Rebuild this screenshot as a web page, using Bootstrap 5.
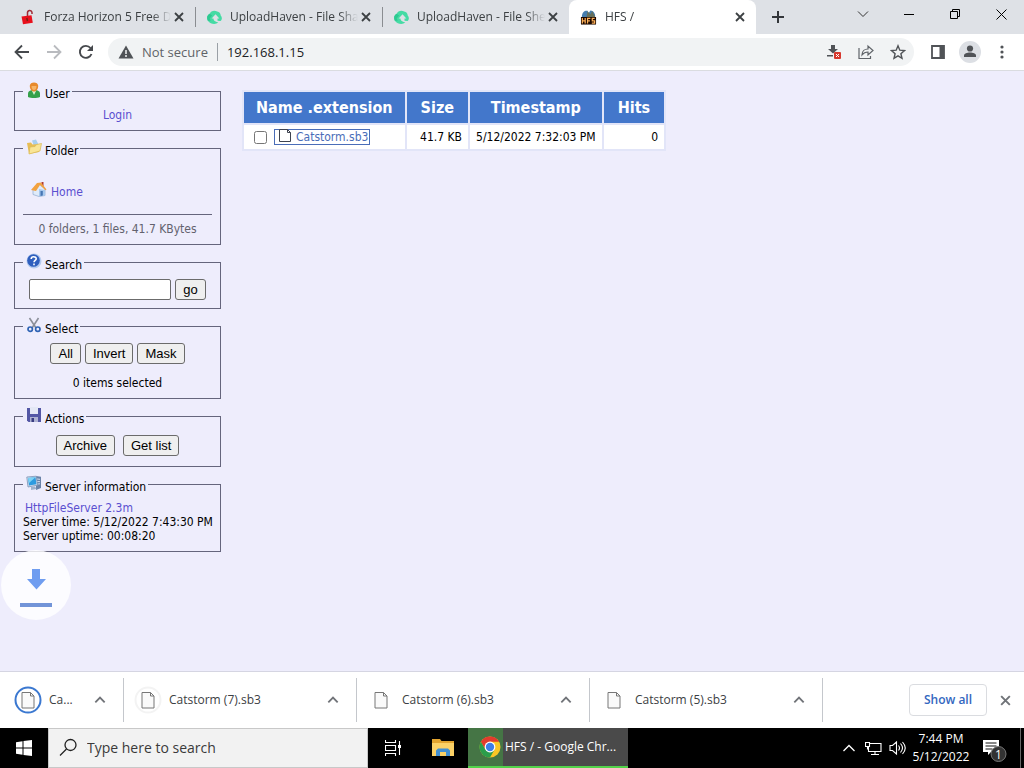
<!DOCTYPE html>
<html lang="en">
<head>
<meta charset="utf-8">
<meta name="viewport" content="width=device-width, initial-scale=1">
<title>HFS /</title>
<link href="https://cdn.jsdelivr.net/npm/bootstrap@5.3.0/dist/css/bootstrap.min.css" rel="stylesheet">
<style>
  body { font: 12px/16px "Open Sans", "Noto Sans", sans-serif; color: #3c4043; background: #eeedfc; }
  button, input { font: inherit; color: inherit; }
  button { background: none; border: 0; padding: 0; }
  svg { display: block; flex: none; }
  .ico-btn { display: inline-flex; align-items: center; justify-content: center; flex: none; }

  /* browser frame */
  .tab-strip { background: #dee1e6; height: 34px; padding-left: 8px; }
  .tab-item { flex: 0 1 187px; min-width: 0; height: 34px; padding: 0 8px 0 12px; position: relative; }
  .tab-item + .tab-item { padding-left: 11px; }
  .tab-item + .tab-item:not(.is-active) { border-left: 1px solid #8a8d91; border-image: linear-gradient(transparent 8px, #8a8d91 8px, #8a8d91 26px, transparent 26px) 1; }
  .tab-item.is-active { background: #fff; border-radius: 8px 8px 0 0; }
  .tab-title { flex: 1 1 0; min-width: 0; text-align: left; overflow: hidden; white-space: nowrap; -webkit-mask-image: linear-gradient(90deg, #000 85%, transparent); mask-image: linear-gradient(90deg, #000 85%, transparent); }
  .tab-shut { width: 16px; height: 16px; }
  .new-tab { width: 44px; height: 34px; }
  .win-btn { width: 46px; height: 28px; }
  .tool-row { background: #fff; height: 37px; padding: 0 6px; border-bottom: 1px solid #dadce0; }
  .tool-btn { width: 32px; height: 32px; }
  .omni { background: #f1f3f4; border-radius: 14px; height: 28px; padding: 0 0 0 10px; margin-left: 6px; margin-right: 8px; }
  .omni-note { font-size: 13px; color: #5f6368; }
  .omni-field { flex: 1 1 0; min-width: 0; border: 0; background: transparent; font-size: 13px; color: #202124; padding: 0 0 0 9px; margin-left: 9px; border-left: 1px solid #9aa0a6; height: 18px; outline: 0; }

  /* file server page */
  .hfs { font: 12px/14px "DejaVu Sans Condensed", "DejaVu Sans", sans-serif; color: #000; position: relative; }
  .hfs a { color: #5a4fd0; text-decoration: none; }
  .side { width: 207px; flex: none; margin: 9px 0 0 14px; gap: 6px; }
  .panel { border: 1px solid #65657c; padding: 6px 8px 8px; min-width: 0; }
  .panel legend { float: none; width: fit-content; height: 22px; margin: 0; padding: 0 2px 0 3px; display: flex; align-items: center; font: inherit; }
  .panel legend svg { margin-right: 3px; margin-bottom: 2px; }
  .panel legend span { padding-top: 6px; }
  .home-row { padding: 16px 0 15px 8px; }
  .sum { border-top: 1px solid #65657c; padding-top: 7px; color: #62626e; }
  .action-row { padding: 2px 0; }
  .about { padding-left: 2px; }
  .hfs-btn { font: 13px/19px "Liberation Sans", Arial, sans-serif; color: #000; background: #efefef; border: 1px solid #6b6b6b; border-radius: 3px; padding: 0 7px; height: 21px; }
  .hfs-field { width: 142px; height: 21px; border: 1px solid #6b6b6b; border-radius: 2px; background: #fff; padding: 0 4px; }
  .files { margin: 19px 0 0 21px; border-collapse: separate; border-spacing: 2px; background: #e2e5f8; align-self: flex-start; }
  .files th { background: #4377cb; color: #fff; font-size: 16px; line-height: 20px; padding: 6px 14px 5px; text-align: center; }
  .files th:first-child { padding-left: 12px; padding-right: 12px; }
  .files td { background: #fff; padding: 4px 6px; text-align: right; line-height: 16px; white-space: nowrap; }
  .files input { width: 13px; height: 13px; margin: 0 7px 0 4px; }
  .files .file-link { color: #4a6db8; border: 1px solid #4a6db8; padding: 0 1px 0 3px; height: 16px; }
  .float-dl { position: absolute; left: 1px; top: 479px; width: 70px; height: 70px; border-radius: 50%; background: rgba(255,255,255,.8); }

  /* download shelf */
  .shelf { background: #fff; border-top: 1px solid #d5d5e2; height: 57px; }
  .shelf .ico-btn { color: #707378; }
  .dl { flex: 0 1 233px; min-width: 0; height: 44px; border-right: 1px solid #c4c7cc; padding: 0 16px 0 10px; }
  .dl-first { flex-basis: 124px; padding-left: 14px; }
  .dl-name { flex: 1 1 0; text-align: left; margin-left: 7px; }
  .show-all { height: 32px; border: 1px solid #dadce0; border-radius: 4px; color: #3367c0; width: 78px; font-weight: 600; }

  /* desktop bar */
  .desk-bar { background: #000; color: #fff; height: 40px; }
  .start-btn { width: 48px; height: 40px; }
  .desk-find { flex: 0 1 320px; min-width: 0; background: #f2f2f2; color: #3a3a3a; border: 1px solid #c8c8c8; }
  .desk-find input { border: 0; background: transparent; font-size: 14px; outline: 0; min-width: 0; }
  .desk-find input::placeholder { color: #3a3a3a; opacity: 1; }
  .desk-btn { width: 50px; height: 40px; }
  .desk-app { flex: 0 0 160px; background: linear-gradient(90deg, #457545 35px, #4a4a4a 35px); border-bottom: 2px solid #52d24a; padding-left: 11px; }
  .tray-btn { width: 24px; height: 40px; }
  .clock { width: 64px; line-height: 18px; }
  .notes { margin: 0 11px 0 8px; }
  .peek { border-left: 1px solid #666; width: 4px; height: 40px; }
</style>
</head>
<body class="vh-100 d-flex flex-column overflow-hidden">

<svg width="0" height="0" class="position-absolute" aria-hidden="true">
  <symbol id="shut" viewBox="0 0 12 12"><path d="M2 2l8 8M10 2l-8 8" stroke="currentColor" stroke-width="1.8"/></symbol>
  <symbol id="haven" viewBox="0 0 14 14"><path d="M.8 10C-.6 7.500.3 4.500 2.500 3.600 3.600.8 7 0 9.500 1.500c2 .3 3.200 1.700 3.300 3.600 1.400 1.300 1.500 4-.2 5.200L9.800 10V8h1.700L8 4 4.300 8H6c.1 2 1.500 3 4.500 3.700C8 13.800 3.500 13.500.8 10z" fill="#45dba4"/><path d="M.8 10C-.6 7.500.3 4.500 2.500 3.600l2.300 1.600L2.500 8l1 2z" fill="#2dc991"/></symbol>
  <symbol id="page" viewBox="0 0 14 18"><path d="M1 1.500h8.500L13 5v12H1z" fill="#fafafa" stroke="#777"/><path d="M9.500 1.500V5H13" fill="none" stroke="#777"/></symbol>
  <symbol id="up" viewBox="0 0 12 12"><path d="M2 8l4-4 4 4" fill="none" stroke="currentColor" stroke-width="1.600"/></symbol>
</svg>

<header>
  <nav class="tab-strip d-flex align-items-center" aria-label="Tabs">
    <div class="tab-item d-flex align-items-center">
      <svg width="16" height="16" viewBox="0 0 16 16"><path d="M7.500 7V4.500C7 .8 11.500.3 12 3.500V5" fill="none" stroke="#a12b35" stroke-width="1.500"/><path d="M1.500 7.500l10-1.300 1.300 7.600-9.800 1.500z" fill="#e8101c"/><path d="M6.800 9l.7 3" stroke="#721" stroke-width="1.500"/></svg>
      <button class="tab-title ms-2">Forza Horizon 5 Free D</button>
      <button class="tab-shut ico-btn" aria-label="Close tab"><svg width="12" height="12"><use href="#shut"/></svg></button>
    </div>
    <div class="tab-item d-flex align-items-center">
      <svg width="15" height="15"><use href="#haven"/></svg>
      <button class="tab-title ms-2">UploadHaven - File Sha</button>
      <button class="tab-shut ico-btn" aria-label="Close tab"><svg width="12" height="12"><use href="#shut"/></svg></button>
    </div>
    <div class="tab-item d-flex align-items-center">
      <svg width="15" height="15"><use href="#haven"/></svg>
      <button class="tab-title ms-2">UploadHaven - File She</button>
      <button class="tab-shut ico-btn" aria-label="Close tab"><svg width="12" height="12"><use href="#shut"/></svg></button>
    </div>
    <div class="tab-item is-active d-flex align-items-center">
      <svg width="17" height="18" viewBox="0 0 18 18"><path d="M2 9C2 4 5 2 8 2.500L9 5l2-3c4 .5 5.500 4 5 7z" fill="#467eaf"/><path d="M8 3l3 3 2-3 3 6H7z" fill="#65705b"/><path d="M1 9h16v8H1z" fill="#1b0800"/><path d="M2.500 10v6M5.500 10v6M2.500 13h3M8 16v-5.500h3M8 13h2.500M15.500 10.500H13V13h2.500v2.500H12.500" fill="none" stroke="#ffb057" stroke-width="1.300"/></svg>
      <button class="tab-title ms-2">HFS /</button>
      <button class="tab-shut ico-btn" aria-label="Close tab"><svg width="12" height="12"><use href="#shut"/></svg></button>
    </div>
    <button class="new-tab ico-btn" aria-label="New tab"><svg width="14" height="14" viewBox="0 0 14 14"><path d="M7 1v12M1 7h12" stroke="#33363a" stroke-width="2"/></svg></button>
    <div class="ms-auto d-flex align-self-start text-black">
      <button class="win-btn ico-btn" aria-label="Search tabs"><svg width="12" height="12" viewBox="0 0 12 12"><path d="M1 3.500l5 5 5-5" fill="none" stroke="#333"/></svg></button>
      <button class="win-btn ico-btn" aria-label="Minimize"><svg width="10" height="10" viewBox="0 0 10 10"><path d="M0 5.500h10" stroke="#000"/></svg></button>
      <button class="win-btn ico-btn" aria-label="Restore"><svg width="10" height="10" viewBox="0 0 10 10"><path d="M.5 2.500h7v7h-7zM2.500 2.500v-2h7v7h-2" fill="none" stroke="#000"/></svg></button>
      <button class="win-btn ico-btn" aria-label="Close"><svg width="11" height="11" viewBox="0 0 11 11"><path d="M.5.500l10 10M10.500.500l-10 10" stroke="#000"/></svg></button>
    </div>
  </nav>

  <div class="tool-row d-flex align-items-center">
    <button class="tool-btn ico-btn" aria-label="Back"><svg width="16" height="16" viewBox="0 0 16 16"><path d="M15 8H2M8 1.500L1.500 8 8 14.500" fill="none" stroke="#46494d" stroke-width="1.800"/></svg></button>
    <button class="tool-btn ico-btn" aria-label="Forward"><svg width="16" height="16" viewBox="0 0 16 16"><path d="M1 8h13M8 1.500L14.500 8 8 14.500" fill="none" stroke="#b9bbbf" stroke-width="1.800"/></svg></button>
    <button class="tool-btn ico-btn" aria-label="Reload"><svg width="16" height="16" viewBox="0 0 16 16"><path d="M13.500 10A6 6 0 1 1 12.500 4" fill="none" stroke="#46494d" stroke-width="1.900"/><path d="M15 1v6H9z" fill="#46494d"/></svg></button>
    <div class="omni flex-fill d-flex align-items-center">
      <svg width="16" height="16" viewBox="0 0 16 16"><path d="M8 1.500L15.500 14.500H.5z" fill="#505357"/><path d="M8 6v4M8 11v2" stroke="#f1f3f4" stroke-width="1.500"/></svg>
      <span class="omni-note ms-2">Not secure</span>
      <input class="omni-field" type="text" value="192.168.1.15" aria-label="Address">
      <button class="tool-btn ico-btn" aria-label="Download blocked"><svg width="16" height="16" viewBox="0 0 16 16"><path d="M5 1h4v4h3L7 9.500 2 5h3zM1 11h6v1.500H1z" fill="#505357"/><rect x="8" y="8" width="7" height="7" rx="1" fill="#d7382e"/><path d="M10 10l3 3M13 10l-3 3" stroke="#fff"/></svg></button>
      <button class="tool-btn ico-btn" aria-label="Share"><svg width="16" height="16" viewBox="0 0 16 16"><path d="M1 4v10.500h11.500V12M4 11c0-4 3-6 6-6V2l5 4.500L10 11V8C7.500 8 5.500 9 4 11z" fill="none" stroke="#5f6368" stroke-width="1.200"/></svg></button>
      <button class="tool-btn ico-btn" aria-label="Bookmark"><svg width="16" height="16" viewBox="0 0 16 16"><path d="M8 1.800l1.800 4.400 4.700.4-3.600 3.100 1.100 4.600L8 11.800l-4 2.500 1.100-4.600-3.600-3.100 4.700-.4z" fill="none" stroke="#505357" stroke-width="1.400"/></svg></button>
    </div>
    <button class="tool-btn ico-btn" aria-label="Side panel"><svg width="14" height="14" viewBox="0 0 14 14"><path d="M1 1h12v12H1z" fill="none" stroke="#505357" stroke-width="1.800"/><path d="M8.500 1H13v12H8.500z" fill="#505357"/></svg></button>
    <button class="tool-btn ico-btn" aria-label="Profile"><svg width="22" height="22" viewBox="0 0 22 22"><circle cx="11" cy="11" r="11" fill="#dcdfe4"/><circle cx="11" cy="7.500" r="3.100" fill="#505357"/><path d="M5 16v-1.500c0-4 12-4 12 0V16z" fill="#505357"/></svg></button>
    <button class="tool-btn ico-btn" aria-label="Menu"><svg width="4" height="14" viewBox="0 0 4 14"><circle cx="2" cy="2" r="1.600" fill="#505357"/><circle cx="2" cy="7" r="1.600" fill="#505357"/><circle cx="2" cy="12" r="1.600" fill="#505357"/></svg></button>
  </div>
</header>

<main class="hfs flex-fill d-flex overflow-hidden">
  <div class="side d-flex flex-column">
    <fieldset class="panel">
      <legend><svg width="16" height="16" viewBox="0 0 16 16"><path d="M2 15V12c0-3 2-4 6-4s6 1 6 4v3c-3 1.300-9 1.300-12 0z" fill="#35a04a"/><path d="M6 9l2 4 2-4z" fill="#d8f0d0"/><path d="M3.800 4C3.500-.8 12.500-.8 12.200 4c0 3-1.800 5.500-4.200 5.500S3.800 7 3.800 4z" fill="#e88a2b"/><path d="M5.500 4h5c0 2.500-1 4-2.500 4S5.500 6.500 5.500 4z" fill="#f7b566"/></svg><span>User</span></legend>
      <div class="text-center"><a href="#">Login</a></div>
    </fieldset>
    <fieldset class="panel">
      <legend><svg width="16" height="16" viewBox="0 0 16 16"><path d="M6 1.500l4-1 4 8-5 2z" fill="#a8cff0"/><path d="M1 4l4-.5 1.500 2L13 5v8L3 15z" fill="#e7bd54"/><path d="M3 15l1-7 5-.5 1.500-2 5-1L14 12z" fill="#f9e596" stroke="#d9b955" stroke-width=".7"/></svg><span>Folder</span></legend>
      <div class="home-row d-flex"><svg class="me-1" width="16" height="16" viewBox="0 0 16 16"><path d="M10.500 1h2v5h-2z" fill="#b03a30"/><path d="M2 8l6-5 6 5v6.500L8 15.500l-6-2z" fill="#dfebfa" stroke="#8ea9cf" stroke-width=".7"/><path d="M8 8l6 1v5.500L8 15.500z" fill="#a7c8ed"/><path d="M0 9l6-7 4-.5 5.500 7-1 .7L9 4 5 10z" fill="#f2a240"/><path d="M9.500 10h2.300v4.500l-2.300.5z" fill="#4675b3"/></svg><a href="#" class="pt-1">Home</a></div>
      <div class="sum text-center">0 folders, 1 files, 41.7 KBytes</div>
    </fieldset>
    <fieldset class="panel">
      <legend><svg width="16" height="16" viewBox="0 0 16 16"><circle cx="8" cy="8" r="7.500" fill="#b6ccef"/><circle cx="7.500" cy="7.500" r="6.300" fill="#2f5fbe"/><path d="M5.200 6c0-3 5-2.800 5-.3C10.200 7.500 8 7.300 8 9.300M8 10.500v1.800" fill="none" stroke="#fff" stroke-width="1.600"/></svg><span><label for="find">Search</label></span></legend>
      <div class="d-flex justify-content-center gap-1"><input id="find" class="hfs-field" type="text"><button class="hfs-btn">go</button></div>
    </fieldset>
    <fieldset class="panel">
      <legend><svg width="16" height="16" viewBox="0 0 16 16"><path d="M3.500 1L10 11M12.500 1L6 11" stroke="#8b8f99" stroke-width="1.600"/><circle cx="4.200" cy="12.200" r="2.200" fill="none" stroke="#2e63b4" stroke-width="1.700"/><circle cx="11.800" cy="12.200" r="2.200" fill="none" stroke="#2e63b4" stroke-width="1.700"/></svg><span>Select</span></legend>
      <div class="d-flex justify-content-center gap-1"><button class="hfs-btn">All</button><button class="hfs-btn">Invert</button><button class="hfs-btn">Mask</button></div>
      <div class="pt-2 mt-1 text-center">0 items selected</div>
    </fieldset>
    <fieldset class="panel">
      <legend><svg width="16" height="16" viewBox="0 0 16 16"><path d="M1 1h14v14H2.500L1 13.500z" fill="#5357a5"/><path d="M4 0h8v7H4z" fill="#e4e8f5"/><path d="M4 10h8v5H4z" fill="#aeb2d2"/><path d="M5.500 11h2.500v4H5.500z" fill="#383c80"/></svg><span>Actions</span></legend>
      <div class="action-row d-flex justify-content-center gap-2"><button class="hfs-btn">Archive</button><button class="hfs-btn">Get list</button></div>
    </fieldset>
    <fieldset class="panel">
      <legend><svg width="16" height="16" viewBox="0 0 16 16"><path d="M10 1l5 .8V13l-5 2z" fill="#6a83a8"/><path d="M11 4l3 .3M11 6.500l3 .2M11 9l3-.2" stroke="#d4e1f0"/><path d="M.8 2l9.500-.8 1.200 9L2 12z" fill="#cfdded" stroke="#7a92b5" stroke-width=".8"/><path d="M2 3l7.500-.7.9 7L3 10.500z" fill="#2d9be0"/><path d="M2 3l7.500-.7L3 8z" fill="#7ed3f5"/><path d="M5 12l4-.6 1.500 2.600-5.500 1z" fill="#9fb2cc"/></svg><span>Server information</span></legend>
      <div class="text-nowrap"><a href="#" class="about d-block">HttpFileServer 2.3m</a>Server time: 5/12/2022 7:43:30 PM<br>Server uptime: 00:08:20</div>
    </fieldset>
  </div>

  <table class="files">
    <thead><tr><th scope="col">Name .extension</th><th scope="col">Size</th><th scope="col">Timestamp</th><th scope="col">Hits</th></tr></thead>
    <tbody><tr>
      <td><div class="d-flex align-items-center"><input type="checkbox" aria-label="Select Catstorm.sb3"><a class="file-link d-flex align-items-center" href="#"><svg class="me-1 mb-1" width="14" height="16" viewBox="0 0 14 16"><path d="M1.500 2.500h8l3 3v9h-11z" fill="#fff" stroke="#3e4350"/><path d="M9.500 2.500v3h3" fill="none" stroke="#3e4350"/></svg>Catstorm.sb3</a></div></td>
      <td>41.7 KB</td><td>5/12/2022 7:32:03 PM</td><td>0</td>
    </tr></tbody>
  </table>

  <div class="float-dl" aria-hidden="true"><svg width="70" height="70" viewBox="0 0 70 70"><path d="M31 19h8v10h6L35.500 39.500 26 29h5z" fill="#6f9df0"/><path d="M19 53h32v4H19z" fill="#7294d8"/></svg></div>
</main>

<section class="shelf d-flex align-items-center" aria-label="Downloads">
  <div class="dl dl-first d-flex align-items-center">
    <svg width="28" height="28" viewBox="0 0 28 28"><circle cx="14" cy="14" r="12.500" fill="#fff" stroke="#3b78d0" stroke-width="2"/><use href="#page" x="7" y="5" width="14" height="18"/></svg>
    <button class="dl-name">Ca...</button><button class="ico-btn" aria-label="Options"><svg width="14" height="14"><use href="#up"/></svg></button>
  </div>
  <div class="dl d-flex align-items-center">
    <svg width="28" height="28" viewBox="0 0 28 28"><circle cx="14" cy="14" r="12.500" fill="#fff" stroke="#f3f3f3" stroke-width="2"/><use href="#page" x="7" y="5" width="14" height="18"/></svg>
    <button class="dl-name">Catstorm (7).sb3</button><button class="ico-btn" aria-label="Options"><svg width="14" height="14"><use href="#up"/></svg></button>
  </div>
  <div class="dl d-flex align-items-center">
    <svg width="28" height="28" viewBox="0 0 28 28"><use href="#page" x="7" y="5" width="14" height="18"/></svg>
    <button class="dl-name">Catstorm (6).sb3</button><button class="ico-btn" aria-label="Options"><svg width="14" height="14"><use href="#up"/></svg></button>
  </div>
  <div class="dl d-flex align-items-center">
    <svg width="28" height="28" viewBox="0 0 28 28"><use href="#page" x="7" y="5" width="14" height="18"/></svg>
    <button class="dl-name">Catstorm (5).sb3</button><button class="ico-btn" aria-label="Options"><svg width="14" height="14"><use href="#up"/></svg></button>
  </div>
  <button class="show-all ms-auto">Show all</button>
  <button class="ico-btn mx-2 px-1" aria-label="Close downloads"><svg width="13" height="13"><use href="#shut"/></svg></button>
</section>

<footer class="desk-bar d-flex">
  <button class="start-btn ico-btn" aria-label="Start"><svg width="16" height="16" viewBox="0 0 16 16"><path d="M0 2.200l6.500-.9v6.200H0zM7.500 1.100L16 0v7.500H7.500zM0 8.500h6.500v6.200L0 13.800zM7.500 8.500H16V16l-8.500-1.100z" fill="#fff"/></svg></button>
  <div class="desk-find d-flex align-items-center">
    <svg class="ms-2 me-1" width="22" height="20" viewBox="0 0 22 20"><circle cx="13.500" cy="7" r="5.500" fill="none" stroke="#222" stroke-width="1.300"/><path d="M9.500 11L3 17.500" stroke="#222" stroke-width="1.300"/></svg>
    <input class="flex-fill ps-1" type="text" placeholder="Type here to search" aria-label="Type here to search">
  </div>
  <button class="desk-btn ico-btn" aria-label="Task view"><svg width="16" height="16" viewBox="0 0 16 16"><path d="M.5 0v2.500h10V0M.5 16v-2.500h10V16M.5 5.500h10v5H.5zM14.500 1v14" fill="none" stroke="#fff" stroke-width="1.100"/><path d="M13 5h3v3h-3z" fill="#fff"/></svg></button>
  <button class="desk-btn ico-btn" aria-label="File Explorer"><svg width="22" height="20" viewBox="0 0 22 20"><path d="M0 1h8l1.500 2H22v15H0z" fill="#e2a42f"/><path d="M0 5h22v13H0z" fill="#fbd166"/><path d="M4 18v-5.500L6 10.500h10l2 2V18h-4v-4H8v4z" fill="#4290d2"/></svg></button>
  <button class="desk-app d-flex align-items-center"><svg width="22" height="22" viewBox="0 0 22 22"><circle cx="11" cy="11" r="10.500" fill="#f9c626"/><path d="M1.900 5.700A10.500 10.500 0 0 1 20.100 5.700H11L6.400 13.700z" fill="#e13b2e"/><path d="M1.900 5.700A10.500 10.500 0 0 0 11 21.500l4.600-8-9.200 0z" fill="#2b9d4b"/><circle cx="11" cy="11" r="5.400" fill="#fff"/><circle cx="11" cy="11" r="4.200" fill="#3c7ee8"/></svg><span class="ps-1">HFS / - Google Chr...</span></button>
  <div class="ms-auto d-flex align-items-center">
    <button class="tray-btn ico-btn" aria-label="Hidden icons"><svg width="14" height="14" viewBox="0 0 14 14"><path d="M1.500 10L7 4.500l5.500 5.500" fill="none" stroke="#fff" stroke-width="1.300"/></svg></button>
    <button class="tray-btn ico-btn" aria-label="Network"><svg width="17" height="16" viewBox="0 0 17 16"><path d="M5 3.500h11v8H3.500V7M10 11.500v3M6 14.500h8M.5 2.500h4v4h-4zM2.500 6.500v3" fill="none" stroke="#fff" stroke-width="1.100"/></svg></button>
    <button class="tray-btn ico-btn" aria-label="Volume"><svg width="17" height="16" viewBox="0 0 17 16"><path d="M1 5.500h2.500l4-3.500v12l-4-3.500H1zM9.500 5.500q2 2.500 0 5M11.500 3.500q4 4.500 0 9M13.500 2q5.500 6 0 12" fill="none" stroke="#fff" stroke-width="1.100"/></svg></button>
    <button class="clock">7:44 PM<br>5/12/2022</button>
    <button class="notes ico-btn" aria-label="Notifications, 1 new"><svg width="28" height="28" viewBox="0 0 28 28"><path d="M2 6h16v12h-8l-3 3v-3H2z" fill="#fff"/><path d="M4.500 9h11M4.500 12h11M4.500 15h7" stroke="#111"/><circle cx="17.500" cy="20" r="7.500" fill="#333" stroke="#777"/><text x="17.500" y="24.500" font-size="12" fill="#fff" text-anchor="middle">1</text></svg></button>
    <div class="peek"></div>
  </div>
</footer>

<script src="https://cdn.jsdelivr.net/npm/bootstrap@5.3.0/dist/js/bootstrap.bundle.min.js"></script>
</body>
</html>
